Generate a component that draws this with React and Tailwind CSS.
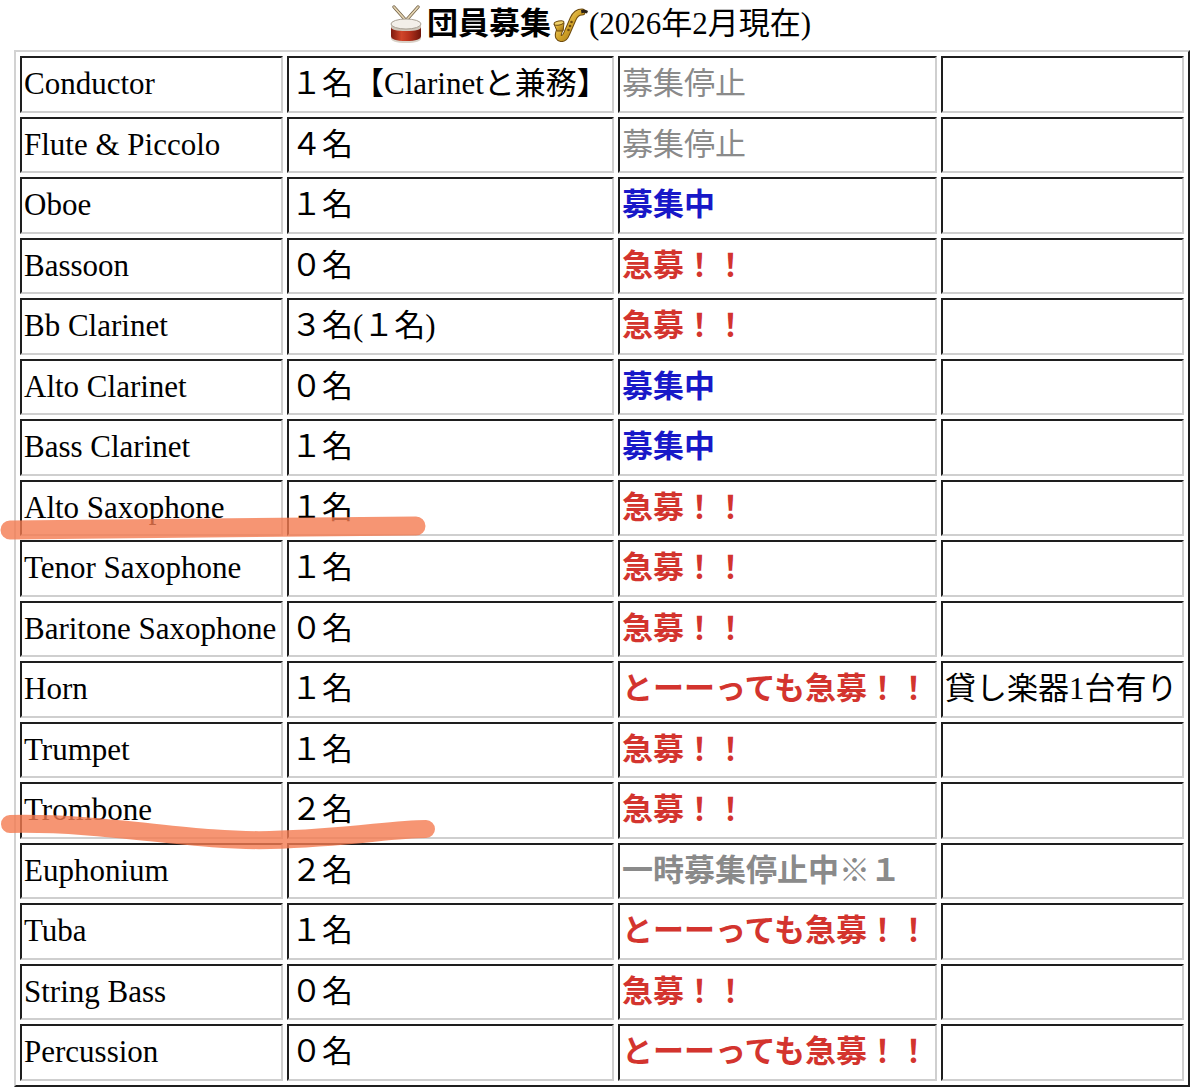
import React from "react";

// status colours seen on the board
const GRAY = "text-[#8a8a8a]";
const BLUE = "text-[#1818c8] font-bold";
const RED = "text-[#d3342e] font-bold";

const ROWS = [
  { part: "Conductor", count: "１名【Clarinetと兼務】", status: "募集停止", tone: GRAY },
  { part: "Flute & Piccolo", count: "４名", status: "募集停止", tone: GRAY },
  { part: "Oboe", count: "１名", status: "募集中", tone: BLUE },
  { part: "Bassoon", count: "０名", status: "急募！！", tone: RED },
  { part: "Bb Clarinet", count: "３名(１名)", status: "急募！！", tone: RED },
  { part: "Alto Clarinet", count: "０名", status: "募集中", tone: BLUE },
  { part: "Bass Clarinet", count: "１名", status: "募集中", tone: BLUE },
  { part: "Alto Saxophone", count: "１名", status: "急募！！", tone: RED },
  { part: "Tenor Saxophone", count: "１名", status: "急募！！", tone: RED },
  { part: "Baritone Saxophone", count: "０名", status: "急募！！", tone: RED },
  { part: "Horn", count: "１名", status: "とーーっても急募！！", tone: RED, note: "貸し楽器1台有り" },
  { part: "Trumpet", count: "１名", status: "急募！！", tone: RED },
  { part: "Trombone", count: "２名", status: "急募！！", tone: RED },
  { part: "Euphonium", count: "２名", status: "一時募集停止中※１", tone: "text-[#8a8a8a] font-bold" },
  { part: "Tuba", count: "１名", status: "とーーっても急募！！", tone: RED },
  { part: "String Bass", count: "０名", status: "急募！！", tone: RED },
  { part: "Percussion", count: "０名", status: "とーーっても急募！！", tone: RED },
];

// inset cell border like an old border=1 table
const CELL =
  "h-[56.5px] p-[2px] border-2 border-t-[#1e1e1e] border-l-[#1e1e1e] border-r-[#cfcfcf] border-b-[#cfcfcf] whitespace-nowrap align-middle";

function Drum() {
  return (
    <svg width="34" height="38" viewBox="0 0 34 38" className="shrink-0">
      <line x1="5" y1="2" x2="21" y2="20" stroke="#6b5a3e" strokeWidth="3.2" strokeLinecap="round" />
      <line x1="5" y1="2" x2="21" y2="20" stroke="#e6d6b5" strokeWidth="1.8" strokeLinecap="round" />
      <line x1="29" y1="2" x2="13" y2="20" stroke="#6b5a3e" strokeWidth="3.2" strokeLinecap="round" />
      <line x1="29" y1="2" x2="13" y2="20" stroke="#e6d6b5" strokeWidth="1.8" strokeLinecap="round" />
      <defs>
        <linearGradient id="drumBody" x1="0" x2="1" y1="0" y2="0">
          <stop offset="0" stopColor="#7e1a0e" />
          <stop offset="0.35" stopColor="#d0452a" />
          <stop offset="0.6" stopColor="#b8321d" />
          <stop offset="1" stopColor="#6d150b" />
        </linearGradient>
      </defs>
      <path d="M2 19 L2 32 Q2 37 17 37 Q32 37 32 32 L32 19 Z" fill="url(#drumBody)" />
      <path d="M2 31 Q2 36 17 36 Q32 36 32 31 L32 33 Q32 38 17 38 Q2 38 2 33 Z" fill="#d9d2c8" />
      <path d="M2 19 L2 22 Q2 26 17 26 Q32 26 32 22 L32 19 Z" fill="#cfc7bb" />
      <ellipse cx="17" cy="19" rx="15" ry="5" fill="#f3efe9" stroke="#a9a195" strokeWidth="1" />
    </svg>
  );
}

function Sax() {
  const body = "M31 6 Q25 6 22 13 L15.5 28 Q13.5 33 10 32.5 Q6.5 32 7.5 27.5 L9 23";
  return (
    <svg width="38" height="36" viewBox="0 0 38 36" className="shrink-0">
      <defs>
        <linearGradient id="saxGold" x1="0" x2="1" y1="0" y2="1">
          <stop offset="0" stopColor="#f8e08a" />
          <stop offset="0.5" stopColor="#d4a52a" />
          <stop offset="1" stopColor="#946914" />
        </linearGradient>
      </defs>
      <path d={body} stroke="#6e4b0e" strokeWidth="7" fill="none" strokeLinecap="round" />
      <path d={body} stroke="url(#saxGold)" strokeWidth="5" fill="none" strokeLinecap="round" />
      <path d="M6 25 L3 18 Q8 15 13 17 L12 25 Z" fill="url(#saxGold)" stroke="#6e4b0e" strokeWidth="1" />
      <ellipse cx="8" cy="17" rx="5" ry="2" transform="rotate(-12 8 17)" fill="#f1d26a" stroke="#6e4b0e" strokeWidth="1" />
      <path d="M30 4 Q34 2.5 37 5 L36 7.5 Q33 6 30.5 7.5 Z" fill="#2a2118" />
      <circle cx="20.5" cy="16" r="1.3" fill="#6e4b0e" />
      <circle cx="19" cy="20" r="1.3" fill="#6e4b0e" />
      <circle cx="17.5" cy="24" r="1.3" fill="#6e4b0e" />
    </svg>
  );
}

export default function App() {
  return (
    <div
      className="relative w-[1200px] h-[1088px] overflow-hidden bg-white text-black"
      style={{ fontFamily: '"Liberation Serif", "Noto Sans CJK JP", serif' }}
    >
      {/* heading */}
      <div className="h-[50px] flex items-center justify-center text-[31px] leading-[36px] pb-[2px]">
        <Drum />
        <span className="font-bold ml-[4px]">団員募集</span>
        <Sax />
        <span>(2026年2月現在)</span>
      </div>

      {/* member table */}
      <table className="ml-[14px] w-[1176px] table-fixed border-separate border-spacing-[4px] border-2 border-t-[#d2d2d2] border-l-[#d2d2d2] border-r-[#1e1e1e] border-b-[#1e1e1e] text-[31px] leading-[36px]">
        <colgroup>
          <col className="w-[263px]" />
          <col className="w-[327px]" />
          <col className="w-[319px]" />
          <col className="w-[243px]" />
        </colgroup>
        <tbody>
          {ROWS.map((r) => (
            <tr key={r.part}>
              <td className={CELL}>{r.part}</td>
              <td className={CELL}>{r.count}</td>
              <td className={`${CELL} ${r.tone}`}>{r.status}</td>
              <td className={CELL}>{r.note || "\u00a0"}</td>
            </tr>
          ))}
        </tbody>
      </table>

      {/* highlighter marks drawn over the table */}
      <svg className="absolute inset-0 pointer-events-none" width="1200" height="1088">
        <path d="M10 530 Q150 528 416 526" stroke="#f47a50" strokeOpacity="0.8" strokeWidth="19" fill="none" strokeLinecap="round" />
        <path d="M10 824 C110 822 190 842 270 840 S390 829 426 829" stroke="#f47a50" strokeOpacity="0.8" strokeWidth="18" fill="none" strokeLinecap="round" />
      </svg>
    </div>
  );
}
